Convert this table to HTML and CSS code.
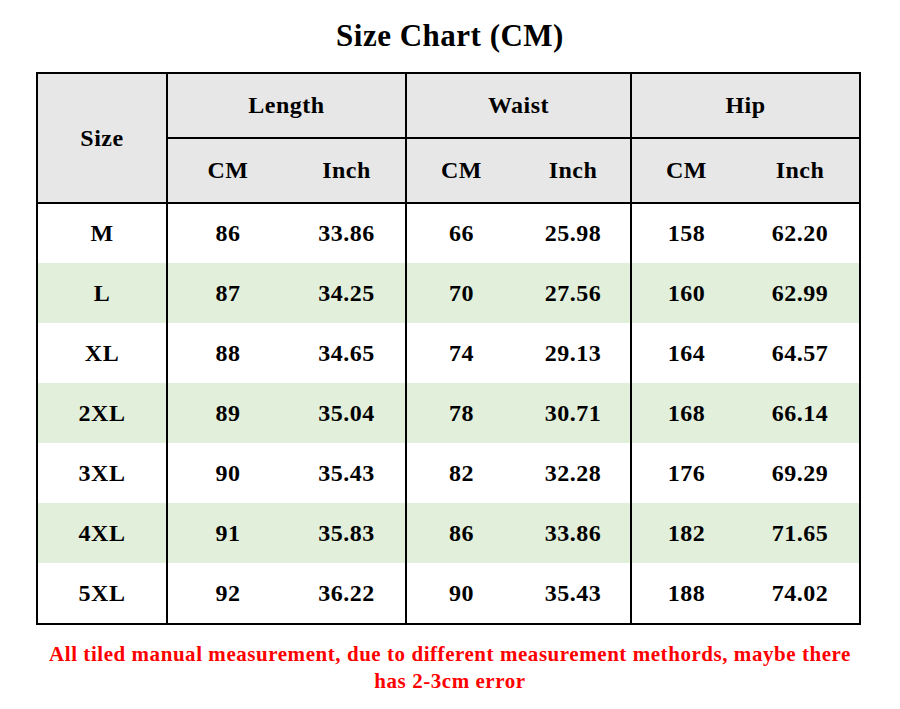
FILE: index.html
```html
<!DOCTYPE html>
<html>
<head>
<meta charset="utf-8">
<link rel="stylesheet" href="styles.css">
</head>
<body>
<div class="page">
  <h1 class="title">Size Chart (CM)</h1>
  <table class="chart">
    <colgroup>
      <col class="c-size"><col class="c-lcm"><col class="c-lin"><col class="c-wcm"><col class="c-win"><col class="c-hcm"><col class="c-hin">
    </colgroup>
    <thead>
      <tr class="hrow">
        <th rowspan="2" class="gl">Size</th>
        <th colspan="2" class="gl">Length</th>
        <th colspan="2" class="gl">Waist</th>
        <th colspan="2" class="gl">Hip</th>
      </tr>
      <tr class="hrow">
        <th class="gl">CM</th><th>Inch</th>
        <th class="gl">CM</th><th>Inch</th>
        <th class="gl">CM</th><th>Inch</th>
      </tr>
    </thead>
    <tbody>
      <tr><td class="gl">M</td><td class="gl">86</td><td>33.86</td><td class="gl">66</td><td>25.98</td><td class="gl">158</td><td>62.20</td></tr>
      <tr class="alt"><td class="gl">L</td><td class="gl">87</td><td>34.25</td><td class="gl">70</td><td>27.56</td><td class="gl">160</td><td>62.99</td></tr>
      <tr><td class="gl">XL</td><td class="gl">88</td><td>34.65</td><td class="gl">74</td><td>29.13</td><td class="gl">164</td><td>64.57</td></tr>
      <tr class="alt"><td class="gl">2XL</td><td class="gl">89</td><td>35.04</td><td class="gl">78</td><td>30.71</td><td class="gl">168</td><td>66.14</td></tr>
      <tr><td class="gl">3XL</td><td class="gl">90</td><td>35.43</td><td class="gl">82</td><td>32.28</td><td class="gl">176</td><td>69.29</td></tr>
      <tr class="alt"><td class="gl">4XL</td><td class="gl">91</td><td>35.83</td><td class="gl">86</td><td>33.86</td><td class="gl">182</td><td>71.65</td></tr>
      <tr><td class="gl">5XL</td><td class="gl">92</td><td>36.22</td><td class="gl">90</td><td>35.43</td><td class="gl">188</td><td>74.02</td></tr>
    </tbody>
  </table>
  <p class="note">All tiled manual measurement, due to different measurement methords, maybe there<br>has 2-3cm error</p>
</div>
</body>
</html>
```
FILE: styles.css
```css
html, body {
  margin: 0;
  padding: 0;
  background: #ffffff;
}
body {
  font-family: "Liberation Serif", "Times New Roman", serif;
  font-weight: bold;
  color: #000000;
}
.page {
  width: 900px;
  height: 709px;
  overflow: hidden;
}
.title {
  margin: 0;
  font-size: 31px;
  font-weight: bold;
  letter-spacing: 0.5px;
  line-height: 72px;
  height: 72px;
  text-align: center;
}
.chart {
  margin-left: 36px;
  width: 823px;
  table-layout: fixed;
  border-collapse: collapse;
  border: 2px solid #000;
}
.c-size { width: 130px; }
.c-lcm { width: 121px; }
.c-lin { width: 118px; }
.c-wcm { width: 110px; }
.c-win { width: 115px; }
.c-hcm { width: 110px; }
.c-hin { width: 119px; }
.chart th,
.chart td {
  padding: 0;
  text-align: center;
  vertical-align: middle;
  font-size: 24px;
  font-weight: bold;
  letter-spacing: 0.5px;
}
.chart th {
  background: #e7e7e7;
  border-top: 2px solid #000;
  border-bottom: 2px solid #000;
  height: 63px;
}
.chart td {
  height: 60px;
}
.chart .gl {
  border-left: 2px solid #000;
}
.chart tbody tr:first-child td {
  height: 59px;
}
.chart .alt td {
  background: #e2efda;
}
.note {
  margin: 16px 0 0;
  text-align: center;
  color: #ff0000;
  font-size: 21px;
  line-height: 27px;
  letter-spacing: 0.55px;
}
```
